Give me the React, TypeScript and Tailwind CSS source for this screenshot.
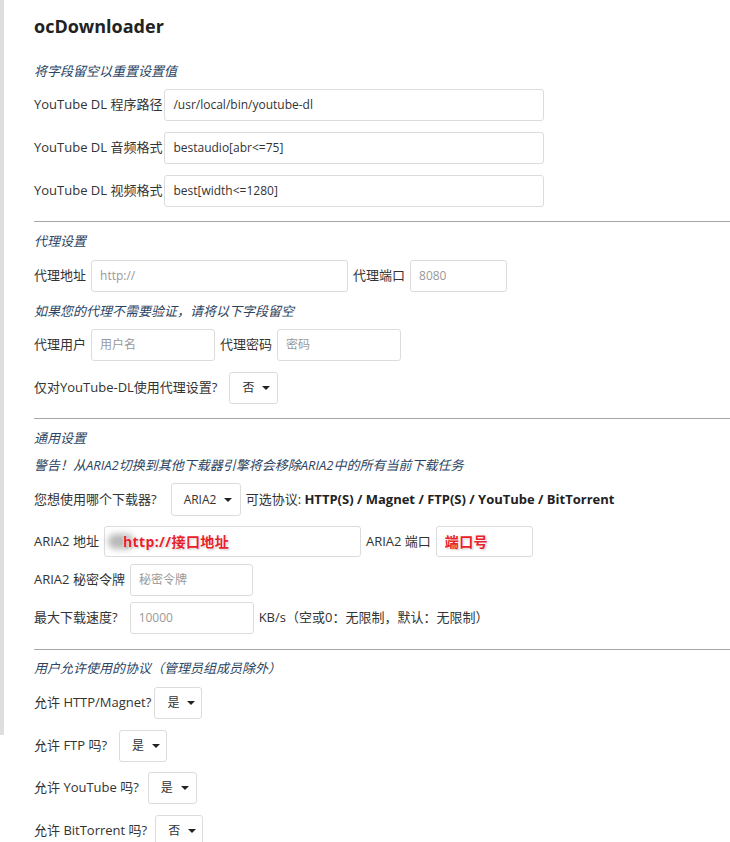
import { ReactNode } from "react";

const font = { fontFamily: '"Open Sans", "Noto Sans CJK SC", sans-serif' };

const Hint = ({ children, className = "" }: { children: ReactNode; className?: string }) => (
  <p className={`h-5 leading-5 text-[13px] italic text-[#2d4563] ${className}`}>{children}</p>
);

const Field = ({
  value,
  placeholder,
  className = "",
  children,
}: {
  value?: string;
  placeholder?: string;
  className?: string;
  children?: ReactNode;
}) => (
  <div
    className={`relative flex items-center h-8 px-2 border border-[#dcdcdc] rounded-[3px] bg-white text-[12px] ${className}`}
  >
    {value ? (
      <span className="text-[#333]">{value}</span>
    ) : placeholder ? (
      <span className="text-[#999]">{placeholder}</span>
    ) : null}
    {children}
  </div>
);

// caret is a plain css triangle
const Select = ({ value, className = "" }: { value: string; className?: string }) => (
  <div
    className={`flex items-center justify-between h-8 pl-3 pr-[9px] border border-[#dcdcdc] rounded-[3px] bg-white text-[12px] text-[#333] ${className}`}
  >
    <span>{value}</span>
    <span className="ml-2 w-0 h-0 border-l-[4px] border-r-[4px] border-t-[4px] border-l-transparent border-r-transparent border-t-[#222]" />
  </div>
);

const Row = ({
  children,
  className = "",
  tight = false,
}: {
  children: ReactNode;
  className?: string;
  tight?: boolean;
}) => (
  <div className={`flex items-center ${tight ? "gap-[2px]" : "gap-[5px]"} ${className}`}>{children}</div>
);

const Label = ({ children }: { children: ReactNode }) => (
  <span className="text-[13px] text-[#333] whitespace-nowrap">{children}</span>
);

const Hr = ({ className = "" }: { className?: string }) => (
  <div className={`h-px bg-[#a6a6a6] ${className}`} />
);

const Marked = ({ children }: { children: ReactNode }) => (
  <span
    className="font-bold text-[14px] tracking-[0.4px] text-[#e8202a]"
    style={{ textShadow: "0 0 2px #fff, 0 0 2px #fff, 1px 1px 2px rgba(0,0,0,0.3)" }}
  >
    {children}
  </span>
);

const App = () => {
  return (
    <div className="min-h-[842px] bg-white flex" style={font}>
      <div className="w-[4px] h-[735px] bg-[#dedede] shrink-0" />
      <div className="flex-1 pl-[30px] flex flex-col">
        <h1 className="mt-[14px] h-6 leading-6 text-[18px] font-bold text-[#222]">ocDownloader</h1>

        <Hint className="mt-[23px]">将字段留空以重置设置值</Hint>
        <Row tight className="mt-[8px]">
          <Label>YouTube DL 程序路径</Label>
          <Field value="/usr/local/bin/youtube-dl" className="w-[380px]" />
        </Row>
        <Row tight className="mt-[11px]">
          <Label>YouTube DL 音频格式</Label>
          <Field value="bestaudio[abr<=75]" className="w-[380px]" />
        </Row>
        <Row tight className="mt-[11px]">
          <Label>YouTube DL 视频格式</Label>
          <Field value="best[width<=1280]" className="w-[380px]" />
        </Row>

        <Hr className="mt-[14px]" />
        <Hint className="mt-[9px]">代理设置</Hint>
        <Row className="mt-[9px]">
          <Label>代理地址</Label>
          <Field placeholder="http://" className="w-[257px]" />
          <Label>代理端口</Label>
          <Field placeholder="8080" className="w-[97px]" />
        </Row>
        <Hint className="mt-[9px]">如果您的代理不需要验证，请将以下字段留空</Hint>
        <Row className="mt-[8px]">
          <Label>代理用户</Label>
          <Field placeholder="用户名" className="w-[124px]" />
          <Label>代理密码</Label>
          <Field placeholder="密码" className="w-[124px]" />
        </Row>
        <Row className="mt-[11px]">
          <Label>仅对YouTube-DL使用代理设置?</Label>
          <Select value="否" className="w-[49px] ml-[7px]" />
        </Row>

        <Hr className="mt-[14px]" />
        <Hint className="mt-[9px]">通用设置</Hint>
        <Hint className="mt-[7px]">警告！从ARIA2切换到其他下载器引擎将会移除ARIA2中的所有当前下载任务</Hint>
        <Row className="mt-[8px]">
          <Label>您想使用哪个下载器?</Label>
          <Select value="ARIA2" className="w-[70px] ml-[9px] h-[33px]" />
          <span className="text-[13px] text-[#333] whitespace-nowrap">
            可选协议: <b className="text-[#222]">HTTP(S) / Magnet / FTP(S) / YouTube / BitTorrent</b>
          </span>
        </Row>
        <Row className="mt-[10px]">
          <Label>ARIA2 地址</Label>
          <Field className="w-[257px] h-[31px] pl-[18px]">
            <span className="absolute left-[3px] top-[7px] w-[26px] h-[15px] rounded-full bg-[#8a8a8a] blur-[3px] opacity-60" />
            <span className="relative">
              <Marked>http://接口地址</Marked>
            </span>
          </Field>
          <Label>ARIA2 端口</Label>
          <Field className="w-[97px] h-[31px]">
            <Marked>端口号</Marked>
          </Field>
        </Row>
        <Row className="mt-[7px]">
          <Label>ARIA2 秘密令牌</Label>
          <Field placeholder="秘密令牌" className="w-[123px]" />
        </Row>
        <Row className="mt-[6px]">
          <Label>最大下载速度?</Label>
          <Field placeholder="10000" className="w-[124px] ml-[7px]" />
          <Label>KB/s（空或0：无限制，默认：无限制）</Label>
        </Row>

        <Hr className="mt-[15px]" />
        <Hint className="mt-[8px]">用户允许使用的协议（管理员组成员除外）</Hint>
        <Row tight className="mt-[9px]">
          <Label>允许 HTTP/Magnet?</Label>
          <Select value="是" className="w-[48px] ml-[1px]" />
        </Row>
        <Row className="mt-[11px]">
          <Label>允许 FTP 吗?</Label>
          <Select value="是" className="w-[48px] ml-[7px]" />
        </Row>
        <Row className="mt-[10px]">
          <Label>允许 YouTube 吗?</Label>
          <Select value="是" className="w-[49px] ml-[4px]" />
        </Row>
        <Row className="mt-[11px]">
          <Label>允许 BitTorrent 吗?</Label>
          <Select value="否" className="w-[48px] ml-[3px]" />
        </Row>
      </div>
    </div>
  );
};

export default App;
